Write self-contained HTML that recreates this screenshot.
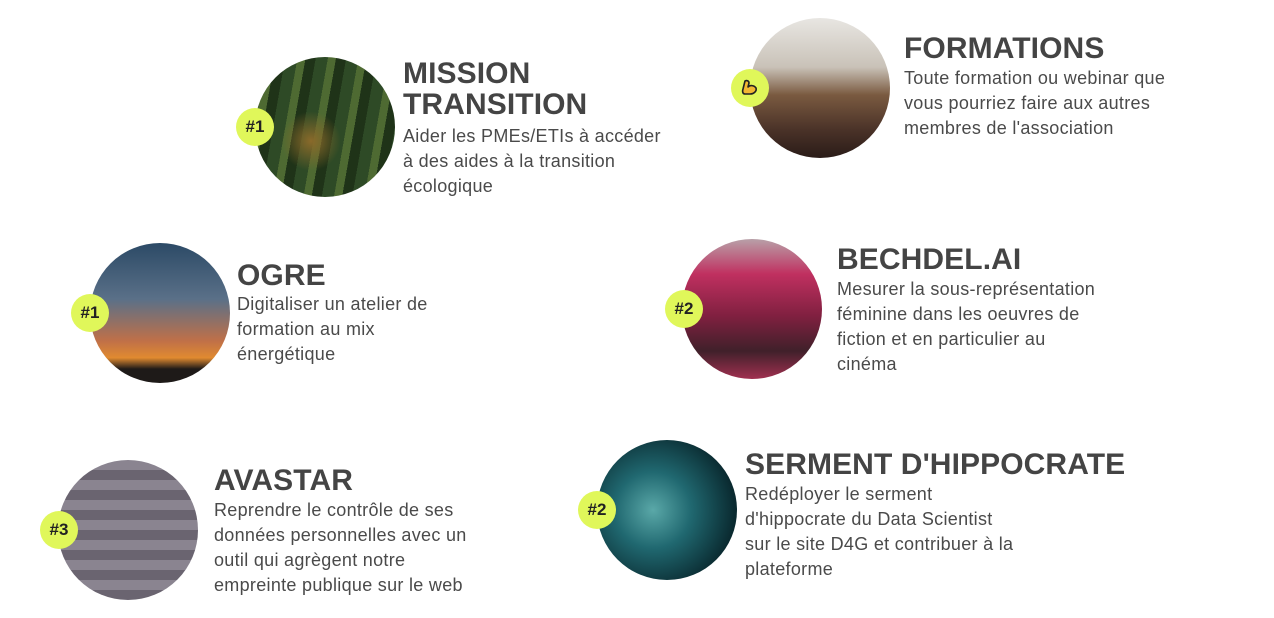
<!DOCTYPE html>
<html><head><meta charset="utf-8"><style>
*{margin:0;padding:0;box-sizing:border-box}
body{width:1274px;height:618px;background:#fff;position:relative;overflow:hidden;font-family:"Liberation Sans",sans-serif;color:#444}
.c{position:absolute;width:140px;height:140px;border-radius:50%;overflow:hidden}
.b{position:absolute;width:38px;height:38px;border-radius:50%;background:#e0f75a;font-weight:bold;font-size:17px;color:#222;display:flex;align-items:center;justify-content:center}
.t{position:absolute;font-weight:bold;font-size:30px;line-height:31px;color:#444;letter-spacing:0.1px}
.d{position:absolute;font-size:18px;line-height:25px;color:#4a4a4a;letter-spacing:0.3px}
</style></head><body>

<div class="c" style="left:255px;top:57px;background:radial-gradient(circle at 40% 60%,#8a6a2a 0,transparent 25%),repeating-linear-gradient(100deg,#2e4a26 0 12px,#4e6a32 12px 20px,#1f3318 20px 30px)"></div>
<div class="b" style="left:236px;top:108px">#1</div>
<div class="t" style="left:403px;top:58px">MISSION<br>TRANSITION</div>
<div class="d" style="left:403px;top:124px">Aider les PMEs/ETIs à accéder<br>à des aides à la transition<br>écologique</div>

<div class="c" style="left:750px;top:18px;background:linear-gradient(180deg,#e8e6e2 0,#c9c2b8 35%,#7a5a40 55%,#4a3228 80%,#2a1c18 100%)"></div>
<div class="b" style="left:731px;top:69px"><svg width="22" height="22" viewBox="0 0 22 22"><path d="M6 4c2-1 4 0 4 2l-1 4c2-2 6-2 8 1 1 3-2 6-6 6H6C4 17 3 15 4 12z" fill="#f2b632" stroke="#222" stroke-width="1.6" stroke-linejoin="round"/></svg></div>
<div class="t" style="left:904px;top:33px">FORMATIONS</div>
<div class="d" style="left:904px;top:66px">Toute formation ou webinar que<br>vous pourriez faire aux autres<br>membres de l'association</div>

<div class="c" style="left:90px;top:243px;background:linear-gradient(180deg,#2c4a66 0,#5a7088 40%,#c07048 70%,#e08a30 82%,#1e1a18 90%)"></div>
<div class="b" style="left:71px;top:294px">#1</div>
<div class="t" style="left:237px;top:260px">OGRE</div>
<div class="d" style="left:237px;top:292px">Digitaliser un atelier de<br>formation au mix<br>énergétique</div>

<div class="c" style="left:682px;top:239px;background:linear-gradient(180deg,#b8a0a8 0,#c03060 25%,#802040 55%,#40202a 80%,#a03050 100%)"></div>
<div class="b" style="left:665px;top:290px">#2</div>
<div class="t" style="left:837px;top:244px">BECHDEL.AI</div>
<div class="d" style="left:837px;top:277px">Mesurer la sous-représentation<br>féminine dans les oeuvres de<br>fiction et en particulier au<br>cinéma</div>

<div class="c" style="left:58px;top:460px;background:repeating-linear-gradient(0deg,#6a6470 0 10px,#8a8490 10px 20px)"></div>
<div class="b" style="left:40px;top:511px">#3</div>
<div class="t" style="left:214px;top:465px">AVASTAR</div>
<div class="d" style="left:214px;top:498px">Reprendre le contrôle de ses<br>données personnelles avec un<br>outil qui agrègent notre<br>empreinte publique sur le web</div>

<div class="c" style="left:597px;top:440px;background:radial-gradient(circle at 40% 50%,#5aa8a8 0,#206870 35%,#0a2a30 75%)"></div>
<div class="b" style="left:578px;top:491px">#2</div>
<div class="t" style="left:745px;top:449px">SERMENT D'HIPPOCRATE</div>
<div class="d" style="left:745px;top:482px">Redéployer le serment<br>d'hippocrate du Data Scientist<br>sur le site D4G et contribuer à la<br>plateforme</div>

</body></html>
